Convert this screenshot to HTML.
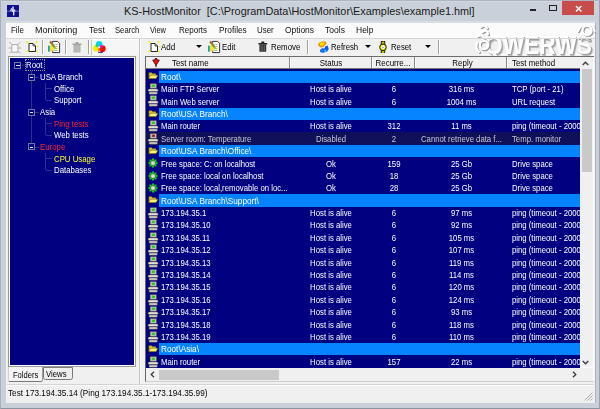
<!DOCTYPE html>
<html><head><meta charset="utf-8"><title>KS-HostMonitor</title>
<style>
html,body{margin:0;padding:0;}
body{width:600px;height:409px;overflow:hidden;position:relative;background:#c9d0d9;font-family:"Liberation Sans",sans-serif;}
div,svg{position:absolute;box-sizing:border-box;}
.t{white-space:pre;line-height:1;}
.ic{overflow:visible}
.title{left:124px;top:5.9px;font-size:10.88px;color:#1a1a1a}
.mt{font-size:9px;color:#111;line-height:13px;transform-origin:0 0}
.lt{font-size:9.3px;color:#fff;line-height:12.39px;height:12.39px;transform:scaleX(0.833);transform-origin:0 0}
.lt.c{text-align:center;transform-origin:50% 0}
.lt.fl{transform:scaleX(0.885)}
.lt.dis{color:#c8c8d0}
.tt{font-size:9.3px;line-height:11.65px;transform:scaleX(0.842);transform-origin:0 0}
.frow{left:159.3px;width:420.7px;height:12.1px;background:#0684ff}
.drow{left:146px;width:434px;height:12.59px;background:#10105a}
.pm{width:7px;height:7px;border:1px solid #70769c;}
.pm:after{content:"";position:absolute;left:1px;top:2.1px;width:3.2px;height:1px;background:#e8e8f0}
.hl{height:1px;background:rgba(150,155,190,0.3)}
.vl{width:1px;background:rgba(150,155,190,0.3)}
.selbox{width:20.5px;height:11.8px;border:1px dotted #9a9a78;}
.ht{font-size:9.3px;color:#000;line-height:13px;top:57.3px;transform:scaleX(0.852);transform-origin:0 0}
.ht.c{text-align:center;transform-origin:50% 0}
.hs{top:57px;width:1px;height:11.3px;background:#8a8a8a;box-shadow:1px 0 0 #fff}
.tb{font-size:9.3px;color:#000;line-height:12px;top:40.5px;transform:scaleX(0.833);transform-origin:0 0}
.sep{top:40px;width:1px;height:14px;background:#a0a0a0;box-shadow:1px 0 0 #fff}
.arr{width:0;height:0;border-left:3.2px solid transparent;border-right:3.2px solid transparent;border-top:3.5px solid #000;top:45.4px}
</style></head><body>
<!-- window frame -->
<div style="left:0;top:0;width:600px;height:409px;border:1px solid #a9b1bd;border-top-color:#adb5c0;border-bottom-color:#8a93a0;border-right-color:#9aa3b0"></div>
<div style="left:1px;top:1px;width:598px;height:1px;background:#d2d8e0"></div>
<div style="left:6px;top:21.4px;width:589px;height:1.3px;background:#d8dde4"></div>
<!-- app icon -->
<svg style="left:7px;top:5px" width="12" height="12" viewBox="0 0 12 12"><rect width="12" height="12" fill="#10108c"/><path d="M0 6.2 H12" stroke="#8088c8" stroke-width="0.8"/><path d="M3.4 6.2 L4.4 3.4 L5.4 6.8 L6 1.6 L6.7 10.4 L7.4 4.6 L8.2 6.2" stroke="#fff" stroke-width="0.8" fill="none"/></svg>
<div class="t title">KS-HostMonitor  [C:\ProgramData\HostMonitor\Examples\example1.hml]</div>
<!-- caption buttons -->
<div style="left:530.2px;top:9.4px;width:6px;height:1.9px;background:#222"></div>
<div style="left:549.2px;top:5.2px;width:7.6px;height:5.7px;border:1px solid #222;border-top-width:1.8px"></div>
<div style="left:562.4px;top:1px;width:32px;height:13.6px;background:#c84c4c"></div>
<svg style="left:575px;top:4.6px" width="7.4" height="7.4" viewBox="0 0 8 8"><path d="M1 1 L7 7 M7 1 L1 7" stroke="#fff" stroke-width="1.5"/></svg>
<!-- client area -->
<div style="left:6.2px;top:22.7px;width:588.4px;height:380.5px;background:#f0f0f0"></div>
<div style="left:594.6px;top:23px;width:0.9px;height:380.2px;background:#adb3be"></div>
<!-- menu bar -->
<div style="left:6.2px;top:22.7px;width:588.4px;height:15.1px;background:#fbfbfb"></div>
<div class="t mt" style="left:11.3px;top:24px;transform:scaleX(0.883)">File</div>
<div class="t mt" style="left:34.7px;top:24px;transform:scaleX(1.009)">Monitoring</div>
<div class="t mt" style="left:88.9px;top:24px;transform:scaleX(0.957)">Test</div>
<div class="t mt" style="left:114.7px;top:24px;transform:scaleX(0.852)">Search</div>
<div class="t mt" style="left:150.4px;top:24px;transform:scaleX(0.827)">View</div>
<div class="t mt" style="left:179.0px;top:24px;transform:scaleX(0.892)">Reports</div>
<div class="t mt" style="left:218.7px;top:24px;transform:scaleX(0.926)">Profiles</div>
<div class="t mt" style="left:257.0px;top:24px;transform:scaleX(0.879)">User</div>
<div class="t mt" style="left:284.7px;top:24px;transform:scaleX(0.935)">Options</div>
<div class="t mt" style="left:325.4px;top:24px;transform:scaleX(0.952)">Tools</div>
<div class="t mt" style="left:356.4px;top:24px;transform:scaleX(0.945)">Help</div>
<!-- watermark -->
<div style="left:478px;top:53.6px;width:116px;height:1.2px;background:#fff"></div>
<div class="t" style="left:485.2px;top:31.7px;font-size:26px;font-weight:bold;color:#fff;text-shadow:1.2px 1.2px 0.3px #9e9e9e,2px 2px 1px #b8b8b8;transform:scaleX(0.875);transform-origin:0 0;width:124.3px;overflow:hidden;height:24px">QWERWS</div>
<svg style="left:472.5px;top:22px" width="26" height="34" viewBox="0 0 26 34"><g fill="none" stroke="#fff" stroke-width="2.3" stroke-linecap="round" style="filter:drop-shadow(1.2px 1.2px 0.4px #949494)"><path d="M8 5 Q12 2 14 6"/><path d="M9 10 Q14 7 15 12"/><path d="M5 14 Q9 12 11 16"/><circle cx="11" cy="23" r="4.2"/><path d="M4 21 Q2 26 6 30"/><path d="M9 17 Q13 15 16 18"/></g></svg>
<svg style="left:574px;top:22px" width="22" height="24" viewBox="0 0 22 24"><g fill="none" stroke="#fff" stroke-width="2.3" stroke-linecap="round" style="filter:drop-shadow(1.2px 1.2px 0.4px #949494)"><circle cx="13" cy="8.5" r="4.6"/><path d="M4 9 Q6 4 10 3"/><path d="M16 2.5 Q20 4 20.5 9"/><path d="M6 14 Q10 17 15 16"/><path d="M3 13 L5 16"/></g></svg>
<!-- toolbars -->
<div style="left:6.2px;top:37.8px;width:588.4px;height:0.9px;background:#d6d6d6"></div>
<div style="left:139.3px;top:39px;width:1px;height:345px;background:#c4c4c4"></div>
<div style="left:140.3px;top:39px;width:1px;height:345px;background:#fbfbfb"></div>
<!-- left toolbar icons -->
<svg style="left:8px;top:40px" width="14" height="14" viewBox="0 0 14 14"><path d="M3.8 4.6 H10 V12.2 H3.8 Z" fill="#f8f8f8" stroke="#a4a4a4" stroke-width="0.9"/><path d="M1.2 1.8 L3.8 4.6 M12.4 1.8 L10 4.6 M0.6 8 H3.6 M13.2 8 H10.2 M1.4 13 L3.6 11.6 M12.6 13 L10.2 11.6" stroke="#a8a8a8" stroke-width="0.9"/></svg>
<svg style="left:25px;top:40px" width="14" height="14" viewBox="0 0 14 14"><path d="M2 1.8 L3.2 2.9 M12 1.6 L11 2.7 M1.8 11.6 L3 10.8 M12.4 11.8 L11.4 11 M12.4 6.6 H13.2" stroke="#f4ec10" stroke-width="1.4" stroke-linecap="round"/><path d="M4 3.5 H8 L10.5 6 V11.5 H4 Z" fill="#fff" stroke="#111" stroke-width="0.9"/><path d="M8 3.5 V6 H10.5" fill="none" stroke="#111" stroke-width="0.7"/></svg>
<div class="sep" style="left:42px"></div>
<svg style="left:47px;top:40px" width="15" height="14" viewBox="0 0 15 14"><path d="M5.6 1.4 H10.6 L12.6 3.4 V12.6 H5.6 Z" fill="#fff" stroke="#222" stroke-width="0.9"/><path d="M7.4 4.5 H11.2 M7.4 6.5 H11.2 M7.4 8.5 H11.2 M7.4 10.5 H11.2" stroke="#777" stroke-width="0.6" stroke-dasharray="1 0.6"/><rect x="1" y="5.6" width="1.9" height="6" fill="#18a0a0"/><rect x="2.8" y="5.4" width="4.6" height="5.8" fill="#e8e050"/><path d="M3.6 2.2 L8.2 7.8" stroke="#8a9010" stroke-width="2"/><path d="M3 1.4 L4.2 2.9" stroke="#a84810" stroke-width="1.6"/><path d="M6.6 7.6 L9.8 8.8" stroke="#d0c838" stroke-width="1.3"/></svg>
<div class="sep" style="left:65px"></div>
<svg style="left:70px;top:40px" width="14" height="14" viewBox="0 0 14 14"><path d="M3.5 5 H10.5 V12.5 H3.5 Z" fill="#b0b0b0"/><path d="M2.5 3.5 H11.5 V5 H2.5 Z M5.5 2 H8.5 V3.5 H5.5Z" fill="#a4a4a4"/><path d="M5.3 6 V12 M7 6 V12 M8.7 6 V12" stroke="#c8c8c8" stroke-width="0.6"/></svg>
<div class="sep" style="left:88px"></div>
<div style="left:91.3px;top:38.8px;width:47.5px;height:16.4px;background:#f6f6f6;border-left:1px solid #c4c4c4;border-top:1px solid #fff"></div>
<svg style="left:92px;top:40px" width="15" height="14" viewBox="0 0 15 14"><circle cx="10.3" cy="8.7" r="3.4" fill="#f01010"/><circle cx="3.9" cy="8.4" r="3.1" fill="#f0f000"/><circle cx="7.2" cy="4.4" r="3.3" fill="#00d8f0"/><circle cx="4.7" cy="5.7" r="1.3" fill="#30e020"/><circle cx="9" cy="6.3" r="1.4" fill="#f010d0"/><circle cx="7" cy="9.7" r="1.4" fill="#f08000"/><circle cx="7.1" cy="7.3" r="1" fill="#f0f0ff"/><path d="M6 12 Q8.5 13.2 11 12" stroke="#202060" stroke-width="1" fill="none"/></svg>
<!-- right toolbar -->
<svg style="left:147px;top:40px" width="14" height="14" viewBox="0 0 14 14"><path d="M2 1.8 L3.2 2.9 M12 1.6 L11 2.7 M1.8 11.6 L3 10.8 M12.4 11.8 L11.4 11 M12.4 6.6 H13.2" stroke="#f4ec10" stroke-width="1.4" stroke-linecap="round"/><path d="M4 3.5 H8 L10.5 6 V11.5 H4 Z" fill="#fff" stroke="#111" stroke-width="0.9"/><path d="M8 3.5 V6 H10.5" fill="none" stroke="#111" stroke-width="0.7"/></svg>
<div class="t tb" style="left:161.4px;transform:scaleX(0.861)">Add</div>
<div class="arr" style="left:196.3px"></div>
<svg style="left:207px;top:40px" width="15" height="14" viewBox="0 0 15 14"><path d="M5.6 1.4 H10.6 L12.6 3.4 V12.6 H5.6 Z" fill="#fff" stroke="#222" stroke-width="0.9"/><path d="M7.4 4.5 H11.2 M7.4 6.5 H11.2 M7.4 8.5 H11.2 M7.4 10.5 H11.2" stroke="#777" stroke-width="0.6" stroke-dasharray="1 0.6"/><rect x="1" y="5.6" width="1.9" height="6" fill="#18a0a0"/><rect x="2.8" y="5.4" width="4.6" height="5.8" fill="#e8e050"/><path d="M3.6 2.2 L8.2 7.8" stroke="#8a9010" stroke-width="2"/><path d="M3 1.4 L4.2 2.9" stroke="#a84810" stroke-width="1.6"/><path d="M6.6 7.6 L9.8 8.8" stroke="#d0c838" stroke-width="1.3"/></svg>
<div class="t tb" style="left:222px">Edit</div>
<svg style="left:255.8px;top:39.3px" width="13.6" height="14.8" viewBox="0 0 14 14"><path d="M3.5 5 H10.5 V12.5 H3.5 Z" fill="#303030"/><path d="M2.5 3.5 H11.5 V5 H2.5 Z M5.5 2 H8.5 V3.5 H5.5Z" fill="#222"/><path d="M5.3 6 V12 M7 6 V12 M8.7 6 V12" stroke="#888" stroke-width="0.6"/></svg>
<div class="t tb" style="left:270.8px;transform:scaleX(0.847)">Remove</div>
<div class="sep" style="left:307px"></div>
<svg style="left:317px;top:40px" width="13" height="14" viewBox="0 0 13 14"><path d="M1 4.6 Q1.4 2.2 4 2 L5.2 1.2 L8.8 1.6 L9.6 4 L7.6 5.2 L6.6 7 L3.6 7.4 L1.8 6.2 Z" fill="#e89800"/><path d="M3 3.2 L5.6 2.2 L7.6 2.6 L7 4.4 L5 5.8 L3.4 5.6 Z" fill="#ffe400"/><path d="M2.8 10.2 L5 8.2 L7.4 8.6 L8.4 6.2 L10.6 5.6 L11.7 9 L10.2 11.6 L6.2 12.7 L3.4 12.2 Z" fill="#1058f0"/><circle cx="8.2" cy="10.8" r="1.3" fill="#10c8ff"/><circle cx="5" cy="10.6" r="1" fill="#2090ff"/></svg>
<div class="t tb" style="left:331px">Refresh</div>
<div class="arr" style="left:365.3px"></div>
<svg style="left:377px;top:40.6px" width="12" height="12.6" viewBox="0 0 12 14"><rect x="4" y="0.5" width="4" height="13" fill="#8c8c00" stroke="#1a1a00" stroke-width="0.9"/><rect x="5.2" y="0.8" width="1.6" height="12.4" fill="#d8d810"/><circle cx="6" cy="7" r="3.7" fill="#e0e010" stroke="#111" stroke-width="1"/><circle cx="6" cy="7" r="1.9" fill="#fff"/><circle cx="6" cy="7" r="0.7" fill="#505080"/></svg>
<div class="t tb" style="left:391px">Reset</div>
<div class="arr" style="left:425.4px"></div>
<div class="sep" style="left:438px"></div>

<!-- left panel -->
<div style="left:8.3px;top:56.4px;width:128.2px;height:310.6px;background:#fff;border:1px solid #9a9a9a"></div>
<div style="left:10.3px;top:58.4px;width:124.2px;height:306.6px;background:#000080"></div>
<div class="pm" style="left:14.40px;top:61.93px"></div>
<div class="hl" style="left:21.60px;top:65.03px;width:3.5px"></div>
<div class="selbox" style="left:24.50px;top:59.40px"></div>
<div class="t tt" style="left:26.4px;top:60.40px;color:#fff">Root</div>
<div class="pm" style="left:28.15px;top:73.58px"></div>
<div class="hl" style="left:35.35px;top:76.68px;width:3.5px"></div>
<div class="t tt" style="left:40.2px;top:72.05px;color:#fff">USA Branch</div>
<div class="hl" style="left:45.5px;top:88.33px;width:6.5px"></div>
<div class="t tt" style="left:54.0px;top:83.70px;color:#fff">Office</div>
<div class="hl" style="left:45.5px;top:99.98px;width:6.5px"></div>
<div class="t tt" style="left:54.0px;top:95.35px;color:#fff">Support</div>
<div class="pm" style="left:28.15px;top:108.53px"></div>
<div class="hl" style="left:35.35px;top:111.63px;width:3.5px"></div>
<div class="t tt" style="left:40.2px;top:107.00px;color:#fff">Asia</div>
<div class="hl" style="left:45.5px;top:123.28px;width:6.5px"></div>
<div class="t tt" style="left:54.0px;top:118.65px;color:#ff2030">Ping tests</div>
<div class="hl" style="left:45.5px;top:134.93px;width:6.5px"></div>
<div class="t tt" style="left:54.0px;top:130.30px;color:#fff">Web tests</div>
<div class="pm" style="left:28.15px;top:143.47px"></div>
<div class="hl" style="left:35.35px;top:146.57px;width:3.5px"></div>
<div class="t tt" style="left:40.2px;top:141.95px;color:#ff2030">Europe</div>
<div class="hl" style="left:45.5px;top:158.22px;width:6.5px"></div>
<div class="t tt" style="left:54.0px;top:153.60px;color:#ffff30">CPU Usage</div>
<div class="hl" style="left:45.5px;top:169.88px;width:6.5px"></div>
<div class="t tt" style="left:54.0px;top:165.25px;color:#fff">Databases</div>
<div class="vl" style="left:31.25px;top:71.03px;height:2.55px"></div>
<div class="vl" style="left:31.25px;top:80.78px;height:27.75px"></div>
<div class="vl" style="left:31.25px;top:115.73px;height:27.75px"></div>
<div class="vl" style="left:45.00px;top:82.68px;height:17.80px"></div>
<div class="vl" style="left:45.00px;top:117.63px;height:17.80px"></div>
<div class="vl" style="left:45.00px;top:152.57px;height:17.80px"></div>
<!-- tabs -->
<div style="left:8px;top:366.8px;width:34.5px;height:15px;background:#f4f4f4;border:1px solid #d0d0d0;border-bottom-color:#777;border-right-color:#999;border-top:none;border-radius:0 0 2px 2px"></div>
<div class="t" style="left:12.5px;top:371.4px;font-size:9.3px;color:#000;transform:scaleX(0.814);transform-origin:0 0">Folders</div>
<div style="left:42.5px;top:367.3px;width:30.2px;height:13.2px;background:#eeeeee;border:1px solid #787878;border-radius:0 0 2.5px 2.5px"></div>
<div class="t" style="left:46px;top:370.4px;font-size:9.3px;color:#000;transform:scaleX(0.833);transform-origin:0 0">Views</div>

<!-- right panel -->
<div style="left:144.6px;top:55.6px;width:449.4px;height:326px;background:#fff;border:1px solid #6c6c6c;border-left-color:#686868;border-bottom-color:#cfcfcf;border-right:none"></div>
<div style="left:146px;top:56.5px;width:434px;height:12.3px;background:#f0f0f0;border-bottom:1px solid #777"></div>
<div style="left:146px;top:68.8px;width:434px;height:298.8px;background:#000080"></div>
<!-- header -->
<svg style="left:152.4px;top:57.6px" width="8" height="10" viewBox="0 0 8 10"><path d="M3 0.6 H5 V2 H7.3 L4 7.6 L0.7 2 H3Z" fill="#f01010" stroke="#3a0808" stroke-width="0.8" stroke-linejoin="round"/><path d="M4 7 V9.2" stroke="#301010" stroke-width="1"/></svg>
<div class="t ht" style="left:172.3px">Test name</div>
<div class="hs" style="left:288.5px"></div>
<div class="t ht c" style="left:289.6px;width:82px">Status</div>
<div class="hs" style="left:371px"></div>
<div class="t ht c" style="left:370.5px;width:44px">Recurre...</div>
<div class="hs" style="left:414.3px"></div>
<div class="t ht c" style="left:418.5px;width:87px">Reply</div>
<div class="hs" style="left:505.8px"></div>
<div class="t ht" style="left:512px">Test method</div>
<div class="frow" style="top:70.55px"></div>
<svg class="ic" style="left:147px;top:70.40px" width="12" height="12" viewBox="0 0 12 12"><path d="M1.8 2.6 L4.6 2.6 L5.4 3.5 L9 3.5 L9 8.6 L1.8 8.6 Z" fill="#d8c438" stroke="#4a4000" stroke-width="0.45"/><path d="M1.8 8.6 L3.4 5.2 L11 5.2 L9.2 8.6 Z" fill="#fff070" stroke="#4a4000" stroke-width="0.45"/></svg>
<div class="t lt fl" style="left:161.3px;top:70.90px">Root\</div>
<svg class="ic" style="left:147px;top:82.99px" width="12" height="12" viewBox="0 0 12 12"><rect x="3.1" y="0.5" width="6.5" height="4.9" rx="0.6" fill="#c4c2b0" stroke="#3a3a40" stroke-width="0.5"/><rect x="4.9" y="1.7" width="3.1" height="2.2" fill="#20d020"/><rect x="4.6" y="5.2" width="3.8" height="0.9" fill="#55555c"/><rect x="1.1" y="5.9" width="10" height="2.6" rx="1.3" fill="#e4e0cc" stroke="#44444a" stroke-width="0.4"/><rect x="1.9" y="9" width="8.6" height="2.3" rx="1.1" fill="#d4d0bc" stroke="#44444a" stroke-width="0.4"/></svg>
<div class="t lt" style="left:160.7px;top:83.19px">Main FTP Server</div>
<div class="t lt c" style="left:289.6px;width:82px;top:83.19px">Host is alive</div>
<div class="t lt c" style="left:371.7px;width:44px;top:83.19px">6</div>
<div class="t lt c" style="left:418.4px;width:87px;top:83.19px">316 ms</div>
<div class="t lt" style="left:512px;top:83.19px;width:81.7px;overflow:hidden">TCP (port - 21)</div>
<svg class="ic" style="left:147px;top:95.38px" width="12" height="12" viewBox="0 0 12 12"><rect x="3.1" y="0.5" width="6.5" height="4.9" rx="0.6" fill="#c4c2b0" stroke="#3a3a40" stroke-width="0.5"/><rect x="4.9" y="1.7" width="3.1" height="2.2" fill="#20d020"/><rect x="4.6" y="5.2" width="3.8" height="0.9" fill="#55555c"/><rect x="1.1" y="5.9" width="10" height="2.6" rx="1.3" fill="#e4e0cc" stroke="#44444a" stroke-width="0.4"/><rect x="1.9" y="9" width="8.6" height="2.3" rx="1.1" fill="#d4d0bc" stroke="#44444a" stroke-width="0.4"/></svg>
<div class="t lt" style="left:160.7px;top:95.58px">Main Web server</div>
<div class="t lt c" style="left:289.6px;width:82px;top:95.58px">Host is alive</div>
<div class="t lt c" style="left:371.7px;width:44px;top:95.58px">6</div>
<div class="t lt c" style="left:418.4px;width:87px;top:95.58px">1004 ms</div>
<div class="t lt" style="left:512px;top:95.58px;width:81.7px;overflow:hidden">URL request</div>
<div class="frow" style="top:107.72px"></div>
<svg class="ic" style="left:147px;top:107.57px" width="12" height="12" viewBox="0 0 12 12"><path d="M1.8 2.6 L4.6 2.6 L5.4 3.5 L9 3.5 L9 8.6 L1.8 8.6 Z" fill="#d8c438" stroke="#4a4000" stroke-width="0.45"/><path d="M1.8 8.6 L3.4 5.2 L11 5.2 L9.2 8.6 Z" fill="#fff070" stroke="#4a4000" stroke-width="0.45"/></svg>
<div class="t lt fl" style="left:161.3px;top:108.07px">Root\USA Branch\</div>
<svg class="ic" style="left:147px;top:120.16px" width="12" height="12" viewBox="0 0 12 12"><rect x="3.1" y="0.5" width="6.5" height="4.9" rx="0.6" fill="#c4c2b0" stroke="#3a3a40" stroke-width="0.5"/><rect x="4.9" y="1.7" width="3.1" height="2.2" fill="#20d020"/><rect x="4.6" y="5.2" width="3.8" height="0.9" fill="#55555c"/><rect x="1.1" y="5.9" width="10" height="2.6" rx="1.3" fill="#e4e0cc" stroke="#44444a" stroke-width="0.4"/><rect x="1.9" y="9" width="8.6" height="2.3" rx="1.1" fill="#d4d0bc" stroke="#44444a" stroke-width="0.4"/></svg>
<div class="t lt" style="left:160.7px;top:120.36px">Main router</div>
<div class="t lt c" style="left:289.6px;width:82px;top:120.36px">Host is alive</div>
<div class="t lt c" style="left:371.7px;width:44px;top:120.36px">312</div>
<div class="t lt c" style="left:418.4px;width:87px;top:120.36px">11 ms</div>
<div class="t lt" style="left:512px;top:120.36px;width:81.7px;overflow:hidden">ping (timeout - 2000</div>
<div class="drow" style="top:132.25px"></div>
<svg class="ic" style="left:147px;top:132.55px" width="12" height="12" viewBox="0 0 12 12"><rect x="3.1" y="0.5" width="6.5" height="4.9" rx="0.6" fill="#c4c2b0" stroke="#3a3a40" stroke-width="0.5"/><rect x="4.9" y="1.7" width="3.1" height="2.2" fill="#b02020"/><rect x="4.6" y="5.2" width="3.8" height="0.9" fill="#55555c"/><rect x="1.1" y="5.9" width="10" height="2.6" rx="1.3" fill="#e4e0cc" stroke="#44444a" stroke-width="0.4"/><rect x="1.9" y="9" width="8.6" height="2.3" rx="1.1" fill="#d4d0bc" stroke="#44444a" stroke-width="0.4"/></svg>
<div class="t lt dis" style="left:160.7px;top:132.75px">Server room: Temperature</div>
<div class="t lt dis c" style="left:289.6px;width:82px;top:132.75px">Disabled</div>
<div class="t lt dis c" style="left:371.7px;width:44px;top:132.75px">2</div>
<div class="t lt dis" style="left:420.6px;top:132.75px">Cannot retrieve data f...</div>
<div class="t lt dis" style="left:512px;top:132.75px;width:81.7px;overflow:hidden">Temp. monitor</div>
<div class="frow" style="top:144.89px"></div>
<svg class="ic" style="left:147px;top:144.74px" width="12" height="12" viewBox="0 0 12 12"><path d="M1.8 2.6 L4.6 2.6 L5.4 3.5 L9 3.5 L9 8.6 L1.8 8.6 Z" fill="#d8c438" stroke="#4a4000" stroke-width="0.45"/><path d="M1.8 8.6 L3.4 5.2 L11 5.2 L9.2 8.6 Z" fill="#fff070" stroke="#4a4000" stroke-width="0.45"/></svg>
<div class="t lt fl" style="left:161.3px;top:145.24px">Root\USA Branch\Office\</div>
<svg class="ic" style="left:147px;top:157.33px" width="12" height="12" viewBox="0 0 12 12"><path d="M6 0.8 L7.3 2.7 L9.6 2.4 L9.3 4.7 L11.2 6 L9.3 7.3 L9.6 9.6 L7.3 9.3 L6 11.2 L4.7 9.3 L2.4 9.6 L2.7 7.3 L0.8 6 L2.7 4.7 L2.4 2.4 L4.7 2.7 Z" fill="#18d018"/><circle cx="6" cy="6" r="2.9" fill="#407040"/><circle cx="6" cy="6" r="2.2" fill="#80e880"/><circle cx="6" cy="6.2" r="1.3" fill="#f0d8e0"/></svg>
<div class="t lt" style="left:160.7px;top:157.53px">Free space: C: on localhost</div>
<div class="t lt c" style="left:289.6px;width:82px;top:157.53px">Ok</div>
<div class="t lt c" style="left:371.7px;width:44px;top:157.53px">159</div>
<div class="t lt c" style="left:418.4px;width:87px;top:157.53px">25 Gb</div>
<div class="t lt" style="left:512px;top:157.53px;width:81.7px;overflow:hidden">Drive space</div>
<svg class="ic" style="left:147px;top:169.72px" width="12" height="12" viewBox="0 0 12 12"><path d="M6 0.8 L7.3 2.7 L9.6 2.4 L9.3 4.7 L11.2 6 L9.3 7.3 L9.6 9.6 L7.3 9.3 L6 11.2 L4.7 9.3 L2.4 9.6 L2.7 7.3 L0.8 6 L2.7 4.7 L2.4 2.4 L4.7 2.7 Z" fill="#18d018"/><circle cx="6" cy="6" r="2.9" fill="#407040"/><circle cx="6" cy="6" r="2.2" fill="#80e880"/><circle cx="6" cy="6.2" r="1.3" fill="#f0d8e0"/></svg>
<div class="t lt" style="left:160.7px;top:169.92px">Free space: local on localhost</div>
<div class="t lt c" style="left:289.6px;width:82px;top:169.92px">Ok</div>
<div class="t lt c" style="left:371.7px;width:44px;top:169.92px">18</div>
<div class="t lt c" style="left:418.4px;width:87px;top:169.92px">25 Gb</div>
<div class="t lt" style="left:512px;top:169.92px;width:81.7px;overflow:hidden">Drive space</div>
<svg class="ic" style="left:147px;top:182.11px" width="12" height="12" viewBox="0 0 12 12"><path d="M6 0.8 L7.3 2.7 L9.6 2.4 L9.3 4.7 L11.2 6 L9.3 7.3 L9.6 9.6 L7.3 9.3 L6 11.2 L4.7 9.3 L2.4 9.6 L2.7 7.3 L0.8 6 L2.7 4.7 L2.4 2.4 L4.7 2.7 Z" fill="#18d018"/><circle cx="6" cy="6" r="2.9" fill="#407040"/><circle cx="6" cy="6" r="2.2" fill="#80e880"/><circle cx="6" cy="6.2" r="1.3" fill="#f0d8e0"/></svg>
<div class="t lt" style="left:160.7px;top:182.31px">Free space: local,removable on loc...</div>
<div class="t lt c" style="left:289.6px;width:82px;top:182.31px">Ok</div>
<div class="t lt c" style="left:371.7px;width:44px;top:182.31px">28</div>
<div class="t lt c" style="left:418.4px;width:87px;top:182.31px">25 Gb</div>
<div class="t lt" style="left:512px;top:182.31px;width:81.7px;overflow:hidden">Drive space</div>
<div class="frow" style="top:194.45px"></div>
<svg class="ic" style="left:147px;top:194.30px" width="12" height="12" viewBox="0 0 12 12"><path d="M1.8 2.6 L4.6 2.6 L5.4 3.5 L9 3.5 L9 8.6 L1.8 8.6 Z" fill="#d8c438" stroke="#4a4000" stroke-width="0.45"/><path d="M1.8 8.6 L3.4 5.2 L11 5.2 L9.2 8.6 Z" fill="#fff070" stroke="#4a4000" stroke-width="0.45"/></svg>
<div class="t lt fl" style="left:161.3px;top:194.80px">Root\USA Branch\Support\</div>
<svg class="ic" style="left:147px;top:206.89px" width="12" height="12" viewBox="0 0 12 12"><rect x="3.1" y="0.5" width="6.5" height="4.9" rx="0.6" fill="#c4c2b0" stroke="#3a3a40" stroke-width="0.5"/><rect x="4.9" y="1.7" width="3.1" height="2.2" fill="#20d020"/><rect x="4.6" y="5.2" width="3.8" height="0.9" fill="#55555c"/><rect x="1.1" y="5.9" width="10" height="2.6" rx="1.3" fill="#e4e0cc" stroke="#44444a" stroke-width="0.4"/><rect x="1.9" y="9" width="8.6" height="2.3" rx="1.1" fill="#d4d0bc" stroke="#44444a" stroke-width="0.4"/></svg>
<div class="t lt" style="left:160.7px;top:207.09px">173.194.35.1</div>
<div class="t lt c" style="left:289.6px;width:82px;top:207.09px">Host is alive</div>
<div class="t lt c" style="left:371.7px;width:44px;top:207.09px">6</div>
<div class="t lt c" style="left:418.4px;width:87px;top:207.09px">97 ms</div>
<div class="t lt" style="left:512px;top:207.09px;width:81.7px;overflow:hidden">ping (timeout - 2000</div>
<svg class="ic" style="left:147px;top:219.28px" width="12" height="12" viewBox="0 0 12 12"><rect x="3.1" y="0.5" width="6.5" height="4.9" rx="0.6" fill="#c4c2b0" stroke="#3a3a40" stroke-width="0.5"/><rect x="4.9" y="1.7" width="3.1" height="2.2" fill="#20d020"/><rect x="4.6" y="5.2" width="3.8" height="0.9" fill="#55555c"/><rect x="1.1" y="5.9" width="10" height="2.6" rx="1.3" fill="#e4e0cc" stroke="#44444a" stroke-width="0.4"/><rect x="1.9" y="9" width="8.6" height="2.3" rx="1.1" fill="#d4d0bc" stroke="#44444a" stroke-width="0.4"/></svg>
<div class="t lt" style="left:160.7px;top:219.48px">173.194.35.10</div>
<div class="t lt c" style="left:289.6px;width:82px;top:219.48px">Host is alive</div>
<div class="t lt c" style="left:371.7px;width:44px;top:219.48px">6</div>
<div class="t lt c" style="left:418.4px;width:87px;top:219.48px">92 ms</div>
<div class="t lt" style="left:512px;top:219.48px;width:81.7px;overflow:hidden">ping (timeout - 2000</div>
<svg class="ic" style="left:147px;top:231.67px" width="12" height="12" viewBox="0 0 12 12"><rect x="3.1" y="0.5" width="6.5" height="4.9" rx="0.6" fill="#c4c2b0" stroke="#3a3a40" stroke-width="0.5"/><rect x="4.9" y="1.7" width="3.1" height="2.2" fill="#20d020"/><rect x="4.6" y="5.2" width="3.8" height="0.9" fill="#55555c"/><rect x="1.1" y="5.9" width="10" height="2.6" rx="1.3" fill="#e4e0cc" stroke="#44444a" stroke-width="0.4"/><rect x="1.9" y="9" width="8.6" height="2.3" rx="1.1" fill="#d4d0bc" stroke="#44444a" stroke-width="0.4"/></svg>
<div class="t lt" style="left:160.7px;top:231.87px">173.194.35.11</div>
<div class="t lt c" style="left:289.6px;width:82px;top:231.87px">Host is alive</div>
<div class="t lt c" style="left:371.7px;width:44px;top:231.87px">6</div>
<div class="t lt c" style="left:418.4px;width:87px;top:231.87px">105 ms</div>
<div class="t lt" style="left:512px;top:231.87px;width:81.7px;overflow:hidden">ping (timeout - 2000</div>
<svg class="ic" style="left:147px;top:244.06px" width="12" height="12" viewBox="0 0 12 12"><rect x="3.1" y="0.5" width="6.5" height="4.9" rx="0.6" fill="#c4c2b0" stroke="#3a3a40" stroke-width="0.5"/><rect x="4.9" y="1.7" width="3.1" height="2.2" fill="#20d020"/><rect x="4.6" y="5.2" width="3.8" height="0.9" fill="#55555c"/><rect x="1.1" y="5.9" width="10" height="2.6" rx="1.3" fill="#e4e0cc" stroke="#44444a" stroke-width="0.4"/><rect x="1.9" y="9" width="8.6" height="2.3" rx="1.1" fill="#d4d0bc" stroke="#44444a" stroke-width="0.4"/></svg>
<div class="t lt" style="left:160.7px;top:244.26px">173.194.35.12</div>
<div class="t lt c" style="left:289.6px;width:82px;top:244.26px">Host is alive</div>
<div class="t lt c" style="left:371.7px;width:44px;top:244.26px">6</div>
<div class="t lt c" style="left:418.4px;width:87px;top:244.26px">107 ms</div>
<div class="t lt" style="left:512px;top:244.26px;width:81.7px;overflow:hidden">ping (timeout - 2000</div>
<svg class="ic" style="left:147px;top:256.45px" width="12" height="12" viewBox="0 0 12 12"><rect x="3.1" y="0.5" width="6.5" height="4.9" rx="0.6" fill="#c4c2b0" stroke="#3a3a40" stroke-width="0.5"/><rect x="4.9" y="1.7" width="3.1" height="2.2" fill="#20d020"/><rect x="4.6" y="5.2" width="3.8" height="0.9" fill="#55555c"/><rect x="1.1" y="5.9" width="10" height="2.6" rx="1.3" fill="#e4e0cc" stroke="#44444a" stroke-width="0.4"/><rect x="1.9" y="9" width="8.6" height="2.3" rx="1.1" fill="#d4d0bc" stroke="#44444a" stroke-width="0.4"/></svg>
<div class="t lt" style="left:160.7px;top:256.65px">173.194.35.13</div>
<div class="t lt c" style="left:289.6px;width:82px;top:256.65px">Host is alive</div>
<div class="t lt c" style="left:371.7px;width:44px;top:256.65px">6</div>
<div class="t lt c" style="left:418.4px;width:87px;top:256.65px">119 ms</div>
<div class="t lt" style="left:512px;top:256.65px;width:81.7px;overflow:hidden">ping (timeout - 2000</div>
<svg class="ic" style="left:147px;top:268.84px" width="12" height="12" viewBox="0 0 12 12"><rect x="3.1" y="0.5" width="6.5" height="4.9" rx="0.6" fill="#c4c2b0" stroke="#3a3a40" stroke-width="0.5"/><rect x="4.9" y="1.7" width="3.1" height="2.2" fill="#20d020"/><rect x="4.6" y="5.2" width="3.8" height="0.9" fill="#55555c"/><rect x="1.1" y="5.9" width="10" height="2.6" rx="1.3" fill="#e4e0cc" stroke="#44444a" stroke-width="0.4"/><rect x="1.9" y="9" width="8.6" height="2.3" rx="1.1" fill="#d4d0bc" stroke="#44444a" stroke-width="0.4"/></svg>
<div class="t lt" style="left:160.7px;top:269.04px">173.194.35.14</div>
<div class="t lt c" style="left:289.6px;width:82px;top:269.04px">Host is alive</div>
<div class="t lt c" style="left:371.7px;width:44px;top:269.04px">6</div>
<div class="t lt c" style="left:418.4px;width:87px;top:269.04px">114 ms</div>
<div class="t lt" style="left:512px;top:269.04px;width:81.7px;overflow:hidden">ping (timeout - 2000</div>
<svg class="ic" style="left:147px;top:281.23px" width="12" height="12" viewBox="0 0 12 12"><rect x="3.1" y="0.5" width="6.5" height="4.9" rx="0.6" fill="#c4c2b0" stroke="#3a3a40" stroke-width="0.5"/><rect x="4.9" y="1.7" width="3.1" height="2.2" fill="#20d020"/><rect x="4.6" y="5.2" width="3.8" height="0.9" fill="#55555c"/><rect x="1.1" y="5.9" width="10" height="2.6" rx="1.3" fill="#e4e0cc" stroke="#44444a" stroke-width="0.4"/><rect x="1.9" y="9" width="8.6" height="2.3" rx="1.1" fill="#d4d0bc" stroke="#44444a" stroke-width="0.4"/></svg>
<div class="t lt" style="left:160.7px;top:281.43px">173.194.35.15</div>
<div class="t lt c" style="left:289.6px;width:82px;top:281.43px">Host is alive</div>
<div class="t lt c" style="left:371.7px;width:44px;top:281.43px">6</div>
<div class="t lt c" style="left:418.4px;width:87px;top:281.43px">120 ms</div>
<div class="t lt" style="left:512px;top:281.43px;width:81.7px;overflow:hidden">ping (timeout - 2000</div>
<svg class="ic" style="left:147px;top:293.62px" width="12" height="12" viewBox="0 0 12 12"><rect x="3.1" y="0.5" width="6.5" height="4.9" rx="0.6" fill="#c4c2b0" stroke="#3a3a40" stroke-width="0.5"/><rect x="4.9" y="1.7" width="3.1" height="2.2" fill="#20d020"/><rect x="4.6" y="5.2" width="3.8" height="0.9" fill="#55555c"/><rect x="1.1" y="5.9" width="10" height="2.6" rx="1.3" fill="#e4e0cc" stroke="#44444a" stroke-width="0.4"/><rect x="1.9" y="9" width="8.6" height="2.3" rx="1.1" fill="#d4d0bc" stroke="#44444a" stroke-width="0.4"/></svg>
<div class="t lt" style="left:160.7px;top:293.82px">173.194.35.16</div>
<div class="t lt c" style="left:289.6px;width:82px;top:293.82px">Host is alive</div>
<div class="t lt c" style="left:371.7px;width:44px;top:293.82px">6</div>
<div class="t lt c" style="left:418.4px;width:87px;top:293.82px">124 ms</div>
<div class="t lt" style="left:512px;top:293.82px;width:81.7px;overflow:hidden">ping (timeout - 2000</div>
<svg class="ic" style="left:147px;top:306.01px" width="12" height="12" viewBox="0 0 12 12"><rect x="3.1" y="0.5" width="6.5" height="4.9" rx="0.6" fill="#c4c2b0" stroke="#3a3a40" stroke-width="0.5"/><rect x="4.9" y="1.7" width="3.1" height="2.2" fill="#20d020"/><rect x="4.6" y="5.2" width="3.8" height="0.9" fill="#55555c"/><rect x="1.1" y="5.9" width="10" height="2.6" rx="1.3" fill="#e4e0cc" stroke="#44444a" stroke-width="0.4"/><rect x="1.9" y="9" width="8.6" height="2.3" rx="1.1" fill="#d4d0bc" stroke="#44444a" stroke-width="0.4"/></svg>
<div class="t lt" style="left:160.7px;top:306.21px">173.194.35.17</div>
<div class="t lt c" style="left:289.6px;width:82px;top:306.21px">Host is alive</div>
<div class="t lt c" style="left:371.7px;width:44px;top:306.21px">6</div>
<div class="t lt c" style="left:418.4px;width:87px;top:306.21px">93 ms</div>
<div class="t lt" style="left:512px;top:306.21px;width:81.7px;overflow:hidden">ping (timeout - 2000</div>
<svg class="ic" style="left:147px;top:318.40px" width="12" height="12" viewBox="0 0 12 12"><rect x="3.1" y="0.5" width="6.5" height="4.9" rx="0.6" fill="#c4c2b0" stroke="#3a3a40" stroke-width="0.5"/><rect x="4.9" y="1.7" width="3.1" height="2.2" fill="#20d020"/><rect x="4.6" y="5.2" width="3.8" height="0.9" fill="#55555c"/><rect x="1.1" y="5.9" width="10" height="2.6" rx="1.3" fill="#e4e0cc" stroke="#44444a" stroke-width="0.4"/><rect x="1.9" y="9" width="8.6" height="2.3" rx="1.1" fill="#d4d0bc" stroke="#44444a" stroke-width="0.4"/></svg>
<div class="t lt" style="left:160.7px;top:318.60px">173.194.35.18</div>
<div class="t lt c" style="left:289.6px;width:82px;top:318.60px">Host is alive</div>
<div class="t lt c" style="left:371.7px;width:44px;top:318.60px">6</div>
<div class="t lt c" style="left:418.4px;width:87px;top:318.60px">118 ms</div>
<div class="t lt" style="left:512px;top:318.60px;width:81.7px;overflow:hidden">ping (timeout - 2000</div>
<svg class="ic" style="left:147px;top:330.79px" width="12" height="12" viewBox="0 0 12 12"><rect x="3.1" y="0.5" width="6.5" height="4.9" rx="0.6" fill="#c4c2b0" stroke="#3a3a40" stroke-width="0.5"/><rect x="4.9" y="1.7" width="3.1" height="2.2" fill="#20d020"/><rect x="4.6" y="5.2" width="3.8" height="0.9" fill="#55555c"/><rect x="1.1" y="5.9" width="10" height="2.6" rx="1.3" fill="#e4e0cc" stroke="#44444a" stroke-width="0.4"/><rect x="1.9" y="9" width="8.6" height="2.3" rx="1.1" fill="#d4d0bc" stroke="#44444a" stroke-width="0.4"/></svg>
<div class="t lt" style="left:160.7px;top:330.99px">173.194.35.19</div>
<div class="t lt c" style="left:289.6px;width:82px;top:330.99px">Host is alive</div>
<div class="t lt c" style="left:371.7px;width:44px;top:330.99px">6</div>
<div class="t lt c" style="left:418.4px;width:87px;top:330.99px">110 ms</div>
<div class="t lt" style="left:512px;top:330.99px;width:81.7px;overflow:hidden">ping (timeout - 2000</div>
<div class="frow" style="top:343.13px"></div>
<svg class="ic" style="left:147px;top:342.98px" width="12" height="12" viewBox="0 0 12 12"><path d="M1.8 2.6 L4.6 2.6 L5.4 3.5 L9 3.5 L9 8.6 L1.8 8.6 Z" fill="#d8c438" stroke="#4a4000" stroke-width="0.45"/><path d="M1.8 8.6 L3.4 5.2 L11 5.2 L9.2 8.6 Z" fill="#fff070" stroke="#4a4000" stroke-width="0.45"/></svg>
<div class="t lt fl" style="left:161.3px;top:343.48px">Root\Asia\</div>
<svg class="ic" style="left:147px;top:355.57px" width="12" height="12" viewBox="0 0 12 12"><rect x="3.1" y="0.5" width="6.5" height="4.9" rx="0.6" fill="#c4c2b0" stroke="#3a3a40" stroke-width="0.5"/><rect x="4.9" y="1.7" width="3.1" height="2.2" fill="#20d020"/><rect x="4.6" y="5.2" width="3.8" height="0.9" fill="#55555c"/><rect x="1.1" y="5.9" width="10" height="2.6" rx="1.3" fill="#e4e0cc" stroke="#44444a" stroke-width="0.4"/><rect x="1.9" y="9" width="8.6" height="2.3" rx="1.1" fill="#d4d0bc" stroke="#44444a" stroke-width="0.4"/></svg>
<div class="t lt" style="left:160.7px;top:355.77px">Main router</div>
<div class="t lt c" style="left:289.6px;width:82px;top:355.77px">Host is alive</div>
<div class="t lt c" style="left:371.7px;width:44px;top:355.77px">157</div>
<div class="t lt c" style="left:418.4px;width:87px;top:355.77px">22 ms</div>
<div class="t lt" style="left:512px;top:355.77px;width:81.7px;overflow:hidden">ping (timeout - 2000</div>
<!-- v scrollbar -->
<div style="left:580px;top:57px;width:13px;height:310px;background:#f0f0f0"></div>
<div style="left:581.7px;top:68.8px;width:10.8px;height:103px;background:#c9c9c9"></div>
<svg style="left:582.4px;top:60.5px" width="7" height="5" viewBox="0 0 7 5"><path d="M0.7 4 L3.5 1.2 L6.3 4" stroke="#3c3c3c" stroke-width="1.3" fill="none"/></svg>
<svg style="left:582.4px;top:360.3px" width="7" height="5" viewBox="0 0 7 5"><path d="M0.7 1 L3.5 3.8 L6.3 1" stroke="#3c3c3c" stroke-width="1.3" fill="none"/></svg>
<!-- h scrollbar -->
<div style="left:146px;top:367.6px;width:447px;height:13.4px;background:#f0f0f0"></div>
<div style="left:158.8px;top:369.6px;width:120.7px;height:10.8px;background:#c9c9c9"></div>
<svg style="left:149.8px;top:371.3px" width="5" height="7" viewBox="0 0 5 7"><path d="M4 0.7 L1.2 3.5 L4 6.3" stroke="#3c3c3c" stroke-width="1.3" fill="none"/></svg>
<svg style="left:571.5px;top:371.3px" width="5" height="7" viewBox="0 0 5 7"><path d="M1 0.7 L3.8 3.5 L1 6.3" stroke="#3c3c3c" stroke-width="1.3" fill="none"/></svg>

<!-- status bar -->
<div style="left:7px;top:383.6px;width:587px;height:1px;background:#d4d4d4"></div>
<div style="left:7px;top:384.6px;width:587px;height:1px;background:#fff"></div>
<div class="t" style="left:7.8px;top:389.4px;font-size:9.3px;color:#000;transform:scaleX(0.883);transform-origin:0 0">Test 173.194.35.14 (Ping 173.194.35.1-173.194.35.99)</div>
<svg style="left:584px;top:392px" width="9" height="9" viewBox="0 0 9 9"><path d="M8.5 0.5 L0.5 8.5 M8.5 3.5 L3.5 8.5 M8.5 6.5 L6.5 8.5" stroke="#a0a0a0" stroke-width="0.9"/></svg>
</body></html>
